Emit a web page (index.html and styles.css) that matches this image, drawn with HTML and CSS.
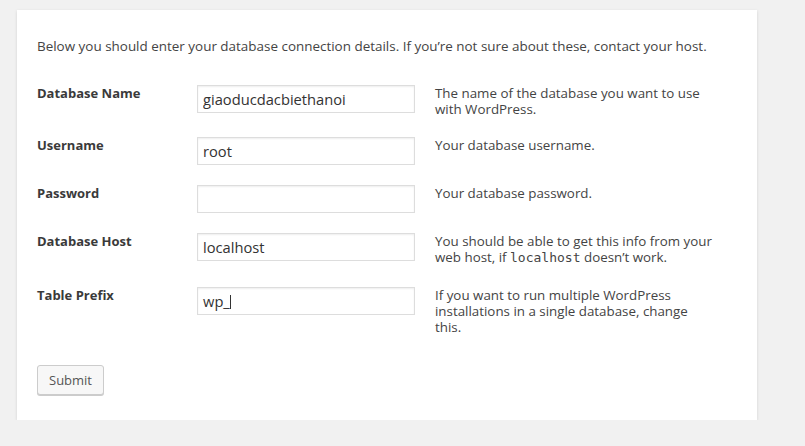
FILE: index.html
```html
<!DOCTYPE html>
<html lang="en">
<head>
<meta charset="utf-8">
<title>WordPress › Setup Configuration File</title>
<link rel="stylesheet" href="styles.css">
</head>
<body>
<form class="card">
  <p class="intro">Below you should enter your database connection details. If you’re not sure about these, contact your host.</p>
  <div class="form-table">
    <label class="label" for="dbname">Database Name</label>
    <input class="field" id="dbname" type="text" value="giaoducdacbiethanoi">
    <div class="desc">The name of the database you want to use<br>with WordPress.</div>

    <label class="label" for="uname">Username</label>
    <input class="field" id="uname" type="text" value="root">
    <div class="desc">Your database username.</div>

    <label class="label" for="pwd">Password</label>
    <input class="field" id="pwd" type="text" value="">
    <div class="desc">Your database password.</div>

    <label class="label" for="dbhost">Database Host</label>
    <input class="field" id="dbhost" type="text" value="localhost">
    <div class="desc desc-code">You should be able to get this info from your<br>web host, if <code>localhost</code> doesn’t work.</div>

    <label class="label" for="prefix">Table Prefix</label>
    <div class="field field-focus" id="prefix">wp_<span class="caret"></span></div>
    <div class="desc">If you want to run multiple WordPress<br>installations in a single database, change<br>this.</div>
  </div>
  <div class="actions">
    <button class="button" type="button">Submit</button>
  </div>
</form>
</body>
</html>
```
FILE: styles.css
```css
html, body {
  margin: 0;
  padding: 0;
  background: #f1f1f1;
}

body {
  font-family: "Open Sans", "Noto Sans", sans-serif;
  font-size: 13px;
  line-height: 16px;
  color: #444;
}

.card {
  display: block;
  box-sizing: border-box;
  width: 740px;
  height: 410px;
  margin: 10px 0 0 17px;
  padding: 20px 20px 24px;
  background: #fff;
  box-shadow: 0 1px 3px rgba(0, 0, 0, 0.13);
}

.intro {
  margin: 8px 0 31px;
  font-size: 13.45px;
  white-space: nowrap;
}

.form-table {
  display: grid;
  grid-template-columns: 160px 218px 1fr;
  row-gap: 20px;
  align-items: start;
}

.label {
  font-weight: 700;
  color: #3a3a3a;
}

.field {
  box-sizing: border-box;
  width: 218px;
  height: 28px;
  margin: 0;
  padding: 0 5px;
  border: 1px solid #ddd;
  box-shadow: inset 0 1px 2px rgba(0, 0, 0, 0.07);
  background: #fff;
  font-family: inherit;
  font-size: 14.7px;
  color: #333;
  outline: none;
  line-height: 26px;
}

.field-focus {
  display: flex;
  align-items: center;
}

.caret {
  display: inline-block;
  width: 1px;
  height: 14px;
  margin-left: 0;
  margin-top: 1px;
  background: #333;
}

.desc {
  padding-left: 20px;
  font-size: 13.35px;
}

.desc-code {
  padding-bottom: 1px;
}

.desc code {
  font-family: "DejaVu Sans Mono", monospace;
  font-size: 13px;
}

.actions {
  margin-top: 30px;
}

.button {
  box-sizing: border-box;
  height: 30px;
  padding: 0 11px;
  border: 1px solid #ccc;
  border-radius: 3px;
  background: #f7f7f7;
  box-shadow: 0 1px 0 #ccc;
  color: #555;
  font-family: inherit;
  font-size: 13px;
  cursor: pointer;
}
```
